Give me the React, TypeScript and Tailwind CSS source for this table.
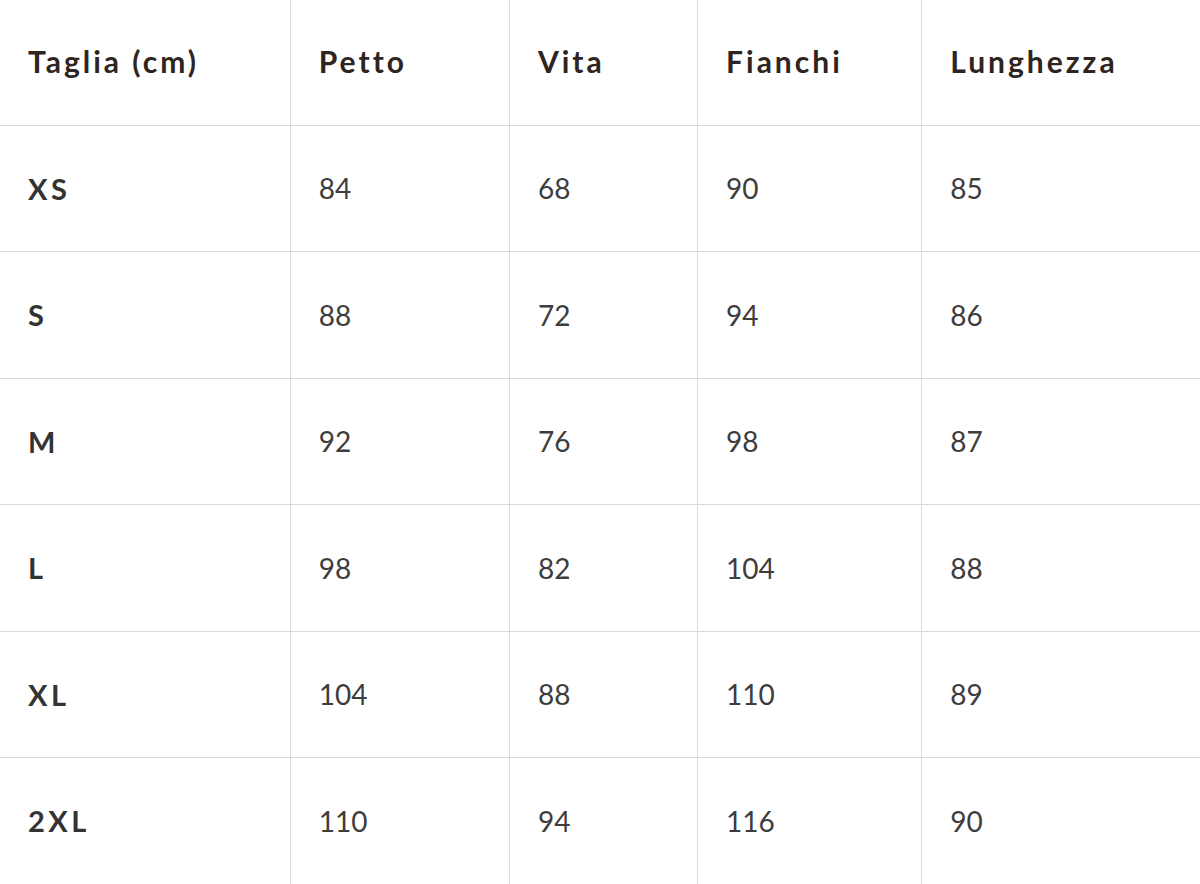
import React from 'react';

const headers = ['Taglia (cm)', 'Petto', 'Vita', 'Fianchi', 'Lunghezza'];

const rows: [string, number, number, number, number][] = [
  ['XS', 84, 68, 90, 85],
  ['S', 88, 72, 94, 86],
  ['M', 92, 76, 98, 87],
  ['L', 98, 82, 104, 88],
  ['XL', 104, 88, 110, 89],
  ['2XL', 110, 94, 116, 90],
];

const colWidths = ['w-[290px]', 'w-[219px]', 'w-[188px]', 'w-[224px]', 'w-[279px]'];

export default function App() {
  return (
    <div className="w-[1200px] h-[884px] bg-white overflow-hidden" style={{ fontFamily: 'Lato, "Noto Sans", sans-serif' }}>
      <table className="w-[1201px] border-collapse table-fixed">
        <colgroup>
          {colWidths.map((w, i) => (
            <col key={i} className={w} />
          ))}
        </colgroup>
        <thead>
          <tr className="h-[125px]">
            {headers.map((h, i) => (
              <th
                key={h}
                className={`px-[28px] pb-[2px] text-left align-middle text-[30px] font-bold tracking-[3px] text-[#2e2420] border-b border-[#d9d9d9] ${i > 0 ? 'border-l' : ''}`}
              >
                {h}
              </th>
            ))}
          </tr>
        </thead>
        <tbody>
          {rows.map((r) => (
            <tr key={r[0]} className="h-[126.5px]">
              {r.map((c, i) => (
                <td
                  key={i}
                  className={`px-[28px] align-middle border-b border-[#d9d9d9] ${i > 0 ? 'border-l text-[28px] font-normal text-[#3d3d3d]' : 'text-[29px] font-bold tracking-[3.5px] text-[#333333]'}`}
                >
                  {c}
                </td>
              ))}
            </tr>
          ))}
        </tbody>
      </table>
    </div>
  );
}
